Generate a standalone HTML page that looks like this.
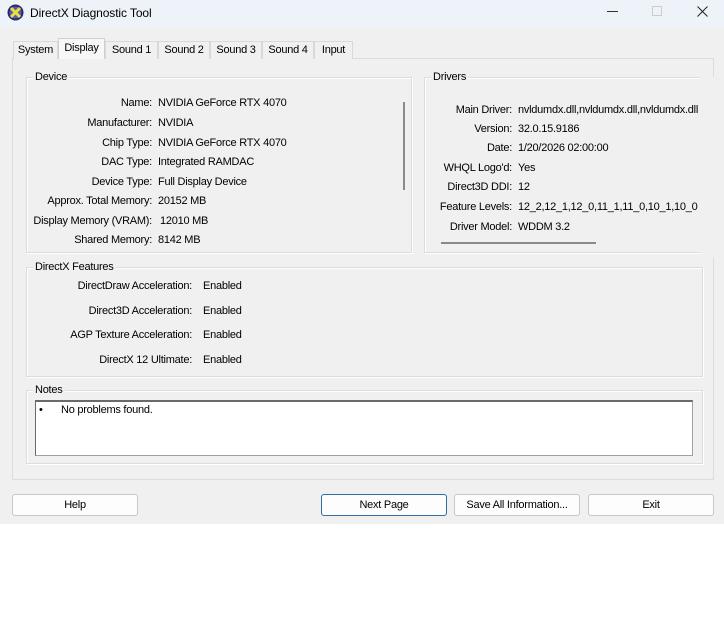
<!DOCTYPE html>
<html><head><meta charset="utf-8"><style>
*{margin:0;padding:0;box-sizing:border-box}
body{width:724px;height:644px;background:#fff;position:relative;overflow:hidden;font-family:"Liberation Sans",Arial,sans-serif;font-size:11px;color:#000;letter-spacing:-0.25px}
.a{position:absolute;white-space:nowrap}
.win{position:absolute;left:0;top:0;width:724px;height:524px;background:#f0f0f0}
.title{position:absolute;left:0;top:0;width:724px;height:27px;background:#eef3f9}
.tab{position:absolute;top:41px;height:18px;border:1px solid #d9d9d9;border-bottom:none;background:#f0f0f0;font-size:11px;text-align:center;line-height:17px}
.panel{position:absolute;left:12px;top:58px;width:702px;height:422px;border:1px solid #dcdcdc;background:#f0f0f0}
.grp{position:absolute;border:1px solid #dcdcdc;box-shadow:inset 1px 1px 0 #fff,1px 1px 0 #fff}
.gl{position:absolute;top:-7px;left:6px;background:#f0f0f0;padding:0 2px;font-size:11px;line-height:13px}
.l{position:absolute;text-align:right;white-space:nowrap;line-height:13px}
.v{position:absolute;white-space:nowrap;line-height:13px}
.btn{position:absolute;top:494px;height:22px;width:126px;border:1px solid #c8c8c8;border-radius:3px;background:#fdfdfd;text-align:center;line-height:20px;font-size:11px}
</style></head><body>
<div class="win"></div>
<div class="title"></div>
<svg class="a" style="left:7px;top:4px" width="17" height="17" viewBox="0 0 17 17"><circle cx="8.5" cy="8.5" r="8" fill="#2a2a6a"/><circle cx="8.5" cy="8.5" r="6" fill="#5a5ab0"/><path d="M4 4L13 13M13 4L4 13" stroke="#e8e040" stroke-width="3"/></svg>
<div class="a" style="left:30px;top:6px;font-size:12px;letter-spacing:-0.1px">DirectX Diagnostic Tool</div>
<div class="a" style="left:607px;top:11px;width:11px;height:1px;background:#333"></div>
<div class="a" style="left:652px;top:6px;width:10px;height:10px;border:1px solid #ccc"></div>
<svg class="a" style="left:697px;top:6px" width="11" height="11" viewBox="0 0 11 11"><path d="M0.5 0.5L10.5 10.5M10.5 0.5L0.5 10.5" stroke="#222" stroke-width="1"/></svg>

<div class="panel"></div>
<div class="tab" style="left:13px;width:45px">System</div>
<div class="tab" style="left:58px;top:38px;height:21px;width:47px;background:#f7f7f7;border-color:#d0d0d0;line-height:18px">Display</div>
<div class="tab" style="left:105px;width:53px">Sound 1</div>
<div class="tab" style="left:158px;width:52px">Sound 2</div>
<div class="tab" style="left:210px;width:52px">Sound 3</div>
<div class="tab" style="left:262px;width:52px">Sound 4</div>
<div class="tab" style="left:314px;width:39px">Input</div>

<div class="grp" style="left:26px;top:77px;width:386px;height:176px"><div class="gl">Device</div></div>
<div class="a" style="left:403px;top:102px;width:2px;height:88px;background:#8a8a8a"></div>
<div class="l" style="right:572px;top:97px">Name:</div><div class="v" style="left:158px;top:97px">NVIDIA GeForce RTX 4070</div>
<div class="l" style="right:572px;top:117px">Manufacturer:</div><div class="v" style="left:158px;top:117px">NVIDIA</div>
<div class="l" style="right:572px;top:137px">Chip Type:</div><div class="v" style="left:158px;top:137px">NVIDIA GeForce RTX 4070</div>
<div class="l" style="right:572px;top:156px">DAC Type:</div><div class="v" style="left:158px;top:156px">Integrated RAMDAC</div>
<div class="l" style="right:572px;top:176px">Device Type:</div><div class="v" style="left:158px;top:176px">Full Display Device</div>
<div class="l" style="right:572px;top:195px">Approx. Total Memory:</div><div class="v" style="left:158px;top:195px">20152 MB</div>
<div class="l" style="right:572px;top:215px">Display Memory (VRAM):</div><div class="v" style="left:160px;top:215px">12010 MB</div>
<div class="l" style="right:572px;top:234px">Shared Memory:</div><div class="v" style="left:158px;top:234px">8142 MB</div>

<div class="grp" style="left:424px;top:77px;width:290px;height:176px;border-right:none"><div class="gl">Drivers</div></div>
<div class="a" style="left:700px;top:77px;width:24px;height:180px;background:#f0f0f0"></div>
<div class="a" style="left:441px;top:242px;width:155px;height:2px;background:#8a8a8a"></div>
<div class="l" style="right:212px;top:104px">Main Driver:</div><div class="v" style="left:518px;top:104px;width:182px;overflow:hidden">nvldumdx.dll,nvldumdx.dll,nvldumdx.dll</div>
<div class="l" style="right:212px;top:123px">Version:</div><div class="v" style="left:518px;top:123px">32.0.15.9186</div>
<div class="l" style="right:212px;top:142px">Date:</div><div class="v" style="left:518px;top:142px">1/20/2026 02:00:00</div>
<div class="l" style="right:212px;top:162px">WHQL Logo'd:</div><div class="v" style="left:518px;top:162px">Yes</div>
<div class="l" style="right:212px;top:181px">Direct3D DDI:</div><div class="v" style="left:518px;top:181px">12</div>
<div class="l" style="right:212px;top:201px">Feature Levels:</div><div class="v" style="left:518px;top:201px;width:182px;overflow:hidden">12_2,12_1,12_0,11_1,11_0,10_1,10_0</div>
<div class="l" style="right:212px;top:221px">Driver Model:</div><div class="v" style="left:518px;top:221px">WDDM 3.2</div>

<div class="grp" style="left:26px;top:267px;width:677px;height:110px"><div class="gl">DirectX Features</div></div>
<div class="l" style="right:532px;top:280px">DirectDraw Acceleration:</div><div class="v" style="left:203px;top:280px">Enabled</div>
<div class="l" style="right:532px;top:305px">Direct3D Acceleration:</div><div class="v" style="left:203px;top:305px">Enabled</div>
<div class="l" style="right:532px;top:329px">AGP Texture Acceleration:</div><div class="v" style="left:203px;top:329px">Enabled</div>
<div class="l" style="right:532px;top:354px">DirectX 12 Ultimate:</div><div class="v" style="left:203px;top:354px">Enabled</div>

<div class="grp" style="left:26px;top:390px;width:677px;height:74px"><div class="gl">Notes</div></div>
<div class="a" style="left:35px;top:400px;width:658px;height:56px;background:#fff;border:1px solid #a0a0a0;border-top:2px solid #6a6a6a;border-left:1px solid #6a6a6a"></div>
<div class="a" style="left:39px;top:404px">•</div>
<div class="a" style="left:61px;top:404px">No problems found.</div>

<div class="btn" style="left:12px">Help</div>
<div class="btn" style="left:321px;border-color:#2f6ea8;background:#fdfdfd">Next Page</div>
<div class="btn" style="left:454px">Save All Information...</div>
<div class="btn" style="left:588px">Exit</div>
</body></html>
